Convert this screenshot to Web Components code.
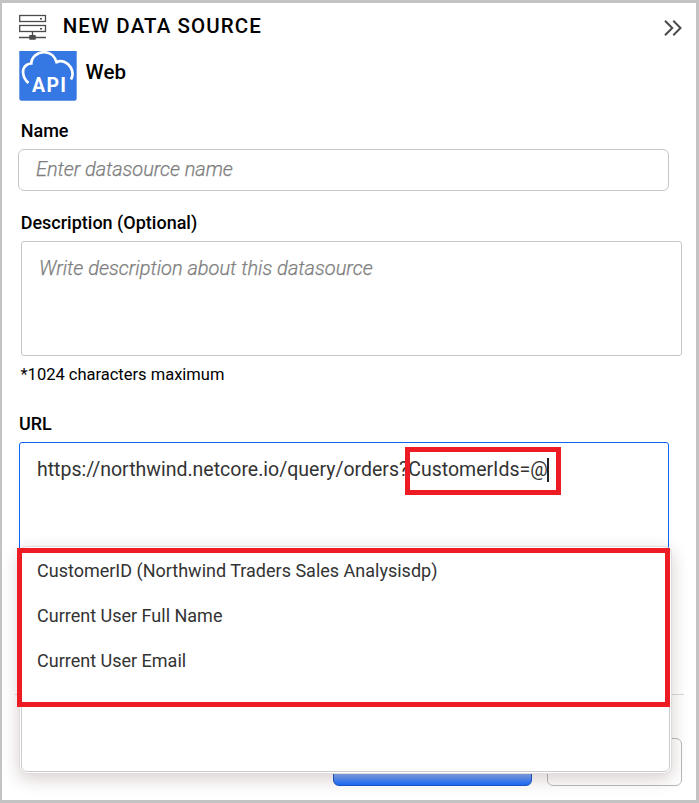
<!DOCTYPE html>
<html lang="en">
<head>
<meta charset="utf-8">
<title>New Data Source</title>
<style>
html,body{margin:0;height:100%}
body{font-family:Roboto,"Liberation Sans",sans-serif;color:#000;background:#fff;overflow:hidden}
</style>
</head>
<body>
<data-source-panel></data-source-panel>
<script>
const define = (name, html) => {
  const tpl = document.createElement('template');
  tpl.innerHTML = html;
  customElements.define(name, class extends HTMLElement {
    constructor() {
      super();
      this.attachShadow({mode: 'open'}).append(tpl.content.cloneNode(true));
    }
  });
};

define('server-icon', `<style>:host{display:block;width:28px;height:28px}svg{display:block}</style>
<svg width="28" height="28" viewBox="0 0 28 28" fill="none" stroke="#4c4c4c">
<rect x=".7" y="2.500" width="25.800" height="6" stroke-width="1.300"/>
<rect x=".7" y="12.500" width="25.800" height="6" stroke-width="1.300"/>
<path d="M13.500 18.500v4M0 24.500h27" stroke-width="1.300"/>
<path d="M10.300 22h6.400v4.800h-6.400z" fill="#4c4c4c" stroke="none"/>
<path d="M21 5h2v1.500h-2zM21 15h2v1.500h-2z" fill="#4c4c4c" stroke="none"/>
</svg>`);

define('api-icon', `<style>:host{display:block;width:58px;height:50px}svg{display:block}text{font:bold 19.500px Roboto,sans-serif}</style>
<svg width="58" height="50" viewBox="0 0 58 50">
<path d="M.3 0h57.400v47.500q0 2.300-2.300 2.300H2.600Q.3 49.800.3 47.500z" fill="#3678e3"/>
<path d="M9.500 32C3.500 27 2 18 7.500 14Q10 12.500 12.300 12.500C12.500 6 18 1.200 25 1.200C32 1.200 36.500 6 38 12.500M37 11.200C43 8.500 49 11.500 51.800 16.500C54.300 21 54 25 52 28.500" fill="none" stroke="#fff" stroke-width="2.700"/>
<text x="13" y="40.700" fill="#fff" textLength="34">API</text>
</svg>`);

define('collapse-icon', `<style>:host{display:block;width:18px;height:16px}svg{display:block}</style>
<svg width="18" height="16" viewBox="0 0 18 16" fill="none" stroke="#4a4a4a" stroke-width="2">
<path d="M1 .8L8.200 8L1 15.200M9.300 .8L16.500 8L9.300 15.200"/></svg>`);

define('panel-header', `<style>
:host{display:flex;height:48px;align-items:flex-start;box-sizing:border-box;padding:10px 14px 0 17px}
h1{margin:1px 0 0 15.700px;font:500 20.500px/24px Roboto,sans-serif;letter-spacing:1.100px;flex:1}
collapse-icon{margin-top:7px}
</style><server-icon></server-icon><h1><slot></slot></h1><collapse-icon></collapse-icon>`);

define('source-type', `<style>
:host{display:flex;height:50px;padding-left:17px;gap:8.500px}
span{font:500 20.500px/24px Roboto,sans-serif;margin-top:9px;letter-spacing:.2px}
</style><api-icon></api-icon><span><slot></slot></span>`);

define('form-field', `<style>
:host{display:block}
.label{display:block;font:500 18px/22px Roboto,sans-serif;padding-left:var(--label-x,18.700px)}
.box{box-sizing:border-box;margin-left:var(--x);width:var(--w);height:var(--h);margin-top:var(--gap);border:1px solid var(--line,#c6c6c6);border-radius:var(--r);padding:var(--pad);font:var(--font);color:var(--ink);letter-spacing:var(--ls,0);white-space:nowrap;-webkit-text-stroke:var(--stroke,0)}
</style><span class="label"><slot name="label"></slot></span><div class="box"><slot></slot></div>`);

define('query-highlight', `<style>
:host{position:relative;display:inline-block}
.frame{position:absolute;left:-3px;top:-11px;box-sizing:border-box;width:156px;height:48px;border:5px solid #ed1c24}
.caret{position:absolute;right:-1px;top:0;width:2px;height:24px;background:#222}
</style><slot></slot><i class="caret"></i><i class="frame"></i>`);

define('suggestion-item', `<style>:host{display:block;font:400 18px/45px Roboto,sans-serif;color:#333;padding-left:15px}</style><slot></slot>`);

define('suggestion-list', `<style>
:host{display:block;position:absolute;box-sizing:border-box;left:21px;top:548px;width:649px;height:224px;background:#fff;border:1px solid #ccc;border-radius:6px;box-shadow:0 0 0 1px #fff,0 0 0 2px #dedcdc,0 5px 17px 2px rgba(60,20,10,.2)}
.frame{position:absolute;left:-5px;top:-1px;box-sizing:border-box;width:653px;height:159px;border:5px solid #ed1c24}
.items{display:block;margin-top:-1px}
</style><i class="frame"></i><div class="items"><slot></slot></div>`);

define('action-button', `<style>
:host{display:block;box-sizing:border-box;height:48px;border:1px solid #b9b9b9;border-radius:6px;width:135px}
:host([primary]){width:199px;background:linear-gradient(#8db2f6 34px,#1a6dff 46px);border-color:#1859c8}
</style><slot></slot>`);

define('data-source-panel', `<style>
:host{display:flex;flex-direction:column;position:relative;box-sizing:border-box;width:699px;height:803px}
.body{display:flex;flex-direction:column;flex:1;box-sizing:border-box;border:solid #c3c3c3;border-width:3px 3px 3px 2px}
form-field{--ink:#7e7e7e}
.name{margin-top:19px;--x:16px;--w:651px;--h:42px;--gap:7px;--r:6px;--pad:7px 0 0 17px;--font:italic 300 20px/24px Roboto,sans-serif;--ls:-.06px;--stroke:.25px}
.desc{margin-top:21px;--x:19px;--w:661px;--h:115px;--gap:7px;--r:3px;--pad:14px 0 0 17px;--font:italic 300 20px/24px Roboto,sans-serif;--stroke:.25px}
.note{font:400 16.500px/20px Roboto,sans-serif;margin:9px 0 0 18.500px}
.url{margin-top:28px;--label-x:17px;--x:17px;--w:650px;--h:115px;--gap:7px;--r:3px;--line:#0d66f0;--ink:#333;--pad:15px 0 0 17px;--font:400 19.500px/24px Roboto,sans-serif}
hr{margin:137px 12px 0 13px;border:0;border-top:1px solid #d8d8d8}
footer{display:flex;justify-content:flex-end;gap:15px;margin:43px 14px 0 0}
</style>
<div class="body">
<panel-header>NEW DATA SOURCE</panel-header>
<source-type>Web</source-type>
<form-field class="name"><span slot="label">Name</span>Enter datasource name</form-field>
<form-field class="desc"><span slot="label">Description (Optional)</span>Write description about this datasource</form-field>
<div class="note">*1024 characters maximum</div>
<form-field class="url"><span slot="label">URL</span>https://northwind.netcore.io/query/orders?<query-highlight>CustomerIds=@</query-highlight></form-field>
<hr>
<footer><action-button primary></action-button><action-button></action-button></footer>
</div>
<suggestion-list>
<suggestion-item>CustomerID (Northwind Traders Sales Analysisdp)</suggestion-item>
<suggestion-item>Current User Full Name</suggestion-item>
<suggestion-item>Current User Email</suggestion-item>
</suggestion-list>`);
</script>
</body>
</html>
